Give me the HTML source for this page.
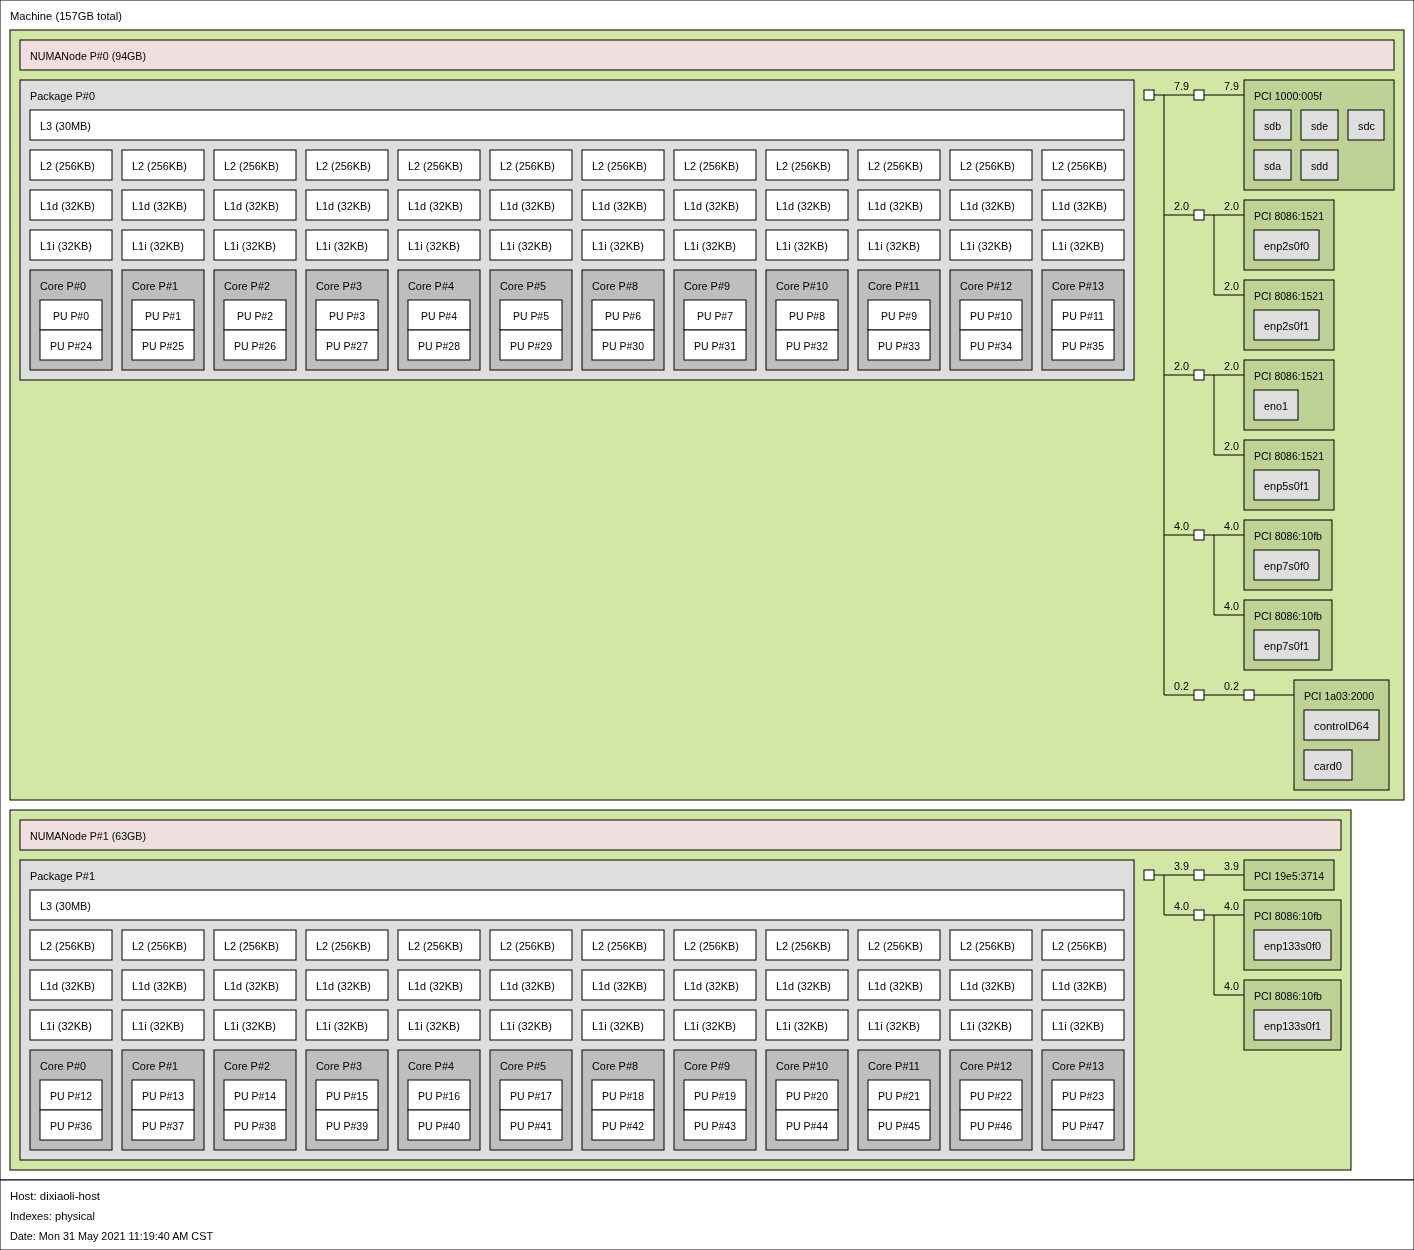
<!DOCTYPE html>
<html lang="en">
<head>
<meta charset="utf-8">
<title>lstopo - dixiaoli-host</title>
<style>
html,body{margin:0;padding:0;background:#fff;}
body{width:1414px;height:1250px;overflow:hidden;}
svg{display:block;will-change:transform;}
rect{stroke:#000;stroke-width:1;}
line{stroke:#000;stroke-width:1;}
text{font-family:"Liberation Sans",sans-serif;font-size:10.75px;fill:#000;}
.mach,.cache,.pu,.br{fill:#fff;}
.grp{fill:#d2e7a4;}
.numa{fill:#efdfde;}
.pkg,.os{fill:#dedede;}
.core{fill:#bebebe;}
.pci{fill:#bed295;}
</style>
</head>
<body>
<svg width="1414" height="1250" viewBox="0 0 1414 1250">
<rect class="mach" x="0" y="0" width="1414" height="1180"/>
<text lengthAdjust="spacingAndGlyphs" x="10" y="20" textLength="112">Machine (157GB total)</text>
<rect class="mach" x="0" y="1180" width="1414" height="70"/>
<text lengthAdjust="spacingAndGlyphs" x="10" y="1200" textLength="90">Host: dixiaoli-host</text>
<text lengthAdjust="spacingAndGlyphs" x="10" y="1220" textLength="85">Indexes: physical</text>
<text lengthAdjust="spacingAndGlyphs" x="10" y="1240" textLength="203">Date: Mon 31 May 2021 11:19:40 AM CST</text>
<rect class="grp" x="10" y="30" width="1394" height="770"/>
<rect class="numa" x="20" y="40" width="1374" height="30"/>
<text lengthAdjust="spacingAndGlyphs" x="30" y="60" textLength="116">NUMANode P#0 (94GB)</text>
<rect class="pkg" x="20" y="80" width="1114" height="300"/>
<text lengthAdjust="spacingAndGlyphs" x="30" y="100" textLength="65">Package P#0</text>
<rect class="cache" x="30" y="110" width="1094" height="30"/>
<text lengthAdjust="spacingAndGlyphs" x="40" y="130" textLength="51">L3 (30MB)</text>
<rect class="cache" x="30" y="150" width="82" height="30"/>
<text lengthAdjust="spacingAndGlyphs" x="40" y="170" textLength="55">L2 (256KB)</text>
<rect class="cache" x="30" y="190" width="82" height="30"/>
<text lengthAdjust="spacingAndGlyphs" x="40" y="210" textLength="55">L1d (32KB)</text>
<rect class="cache" x="30" y="230" width="82" height="30"/>
<text lengthAdjust="spacingAndGlyphs" x="40" y="250" textLength="52">L1i (32KB)</text>
<rect class="core" x="30" y="270" width="82" height="100"/>
<text lengthAdjust="spacingAndGlyphs" x="40" y="290" textLength="46">Core P#0</text>
<rect class="pu" x="40" y="300" width="62" height="30"/>
<text lengthAdjust="spacingAndGlyphs" x="53" y="320" textLength="36">PU P#0</text>
<rect class="pu" x="40" y="330" width="62" height="30"/>
<text lengthAdjust="spacingAndGlyphs" x="50" y="350" textLength="42">PU P#24</text>
<rect class="cache" x="122" y="150" width="82" height="30"/>
<text lengthAdjust="spacingAndGlyphs" x="132" y="170" textLength="55">L2 (256KB)</text>
<rect class="cache" x="122" y="190" width="82" height="30"/>
<text lengthAdjust="spacingAndGlyphs" x="132" y="210" textLength="55">L1d (32KB)</text>
<rect class="cache" x="122" y="230" width="82" height="30"/>
<text lengthAdjust="spacingAndGlyphs" x="132" y="250" textLength="52">L1i (32KB)</text>
<rect class="core" x="122" y="270" width="82" height="100"/>
<text lengthAdjust="spacingAndGlyphs" x="132" y="290" textLength="46">Core P#1</text>
<rect class="pu" x="132" y="300" width="62" height="30"/>
<text lengthAdjust="spacingAndGlyphs" x="145" y="320" textLength="36">PU P#1</text>
<rect class="pu" x="132" y="330" width="62" height="30"/>
<text lengthAdjust="spacingAndGlyphs" x="142" y="350" textLength="42">PU P#25</text>
<rect class="cache" x="214" y="150" width="82" height="30"/>
<text lengthAdjust="spacingAndGlyphs" x="224" y="170" textLength="55">L2 (256KB)</text>
<rect class="cache" x="214" y="190" width="82" height="30"/>
<text lengthAdjust="spacingAndGlyphs" x="224" y="210" textLength="55">L1d (32KB)</text>
<rect class="cache" x="214" y="230" width="82" height="30"/>
<text lengthAdjust="spacingAndGlyphs" x="224" y="250" textLength="52">L1i (32KB)</text>
<rect class="core" x="214" y="270" width="82" height="100"/>
<text lengthAdjust="spacingAndGlyphs" x="224" y="290" textLength="46">Core P#2</text>
<rect class="pu" x="224" y="300" width="62" height="30"/>
<text lengthAdjust="spacingAndGlyphs" x="237" y="320" textLength="36">PU P#2</text>
<rect class="pu" x="224" y="330" width="62" height="30"/>
<text lengthAdjust="spacingAndGlyphs" x="234" y="350" textLength="42">PU P#26</text>
<rect class="cache" x="306" y="150" width="82" height="30"/>
<text lengthAdjust="spacingAndGlyphs" x="316" y="170" textLength="55">L2 (256KB)</text>
<rect class="cache" x="306" y="190" width="82" height="30"/>
<text lengthAdjust="spacingAndGlyphs" x="316" y="210" textLength="55">L1d (32KB)</text>
<rect class="cache" x="306" y="230" width="82" height="30"/>
<text lengthAdjust="spacingAndGlyphs" x="316" y="250" textLength="52">L1i (32KB)</text>
<rect class="core" x="306" y="270" width="82" height="100"/>
<text lengthAdjust="spacingAndGlyphs" x="316" y="290" textLength="46">Core P#3</text>
<rect class="pu" x="316" y="300" width="62" height="30"/>
<text lengthAdjust="spacingAndGlyphs" x="329" y="320" textLength="36">PU P#3</text>
<rect class="pu" x="316" y="330" width="62" height="30"/>
<text lengthAdjust="spacingAndGlyphs" x="326" y="350" textLength="42">PU P#27</text>
<rect class="cache" x="398" y="150" width="82" height="30"/>
<text lengthAdjust="spacingAndGlyphs" x="408" y="170" textLength="55">L2 (256KB)</text>
<rect class="cache" x="398" y="190" width="82" height="30"/>
<text lengthAdjust="spacingAndGlyphs" x="408" y="210" textLength="55">L1d (32KB)</text>
<rect class="cache" x="398" y="230" width="82" height="30"/>
<text lengthAdjust="spacingAndGlyphs" x="408" y="250" textLength="52">L1i (32KB)</text>
<rect class="core" x="398" y="270" width="82" height="100"/>
<text lengthAdjust="spacingAndGlyphs" x="408" y="290" textLength="46">Core P#4</text>
<rect class="pu" x="408" y="300" width="62" height="30"/>
<text lengthAdjust="spacingAndGlyphs" x="421" y="320" textLength="36">PU P#4</text>
<rect class="pu" x="408" y="330" width="62" height="30"/>
<text lengthAdjust="spacingAndGlyphs" x="418" y="350" textLength="42">PU P#28</text>
<rect class="cache" x="490" y="150" width="82" height="30"/>
<text lengthAdjust="spacingAndGlyphs" x="500" y="170" textLength="55">L2 (256KB)</text>
<rect class="cache" x="490" y="190" width="82" height="30"/>
<text lengthAdjust="spacingAndGlyphs" x="500" y="210" textLength="55">L1d (32KB)</text>
<rect class="cache" x="490" y="230" width="82" height="30"/>
<text lengthAdjust="spacingAndGlyphs" x="500" y="250" textLength="52">L1i (32KB)</text>
<rect class="core" x="490" y="270" width="82" height="100"/>
<text lengthAdjust="spacingAndGlyphs" x="500" y="290" textLength="46">Core P#5</text>
<rect class="pu" x="500" y="300" width="62" height="30"/>
<text lengthAdjust="spacingAndGlyphs" x="513" y="320" textLength="36">PU P#5</text>
<rect class="pu" x="500" y="330" width="62" height="30"/>
<text lengthAdjust="spacingAndGlyphs" x="510" y="350" textLength="42">PU P#29</text>
<rect class="cache" x="582" y="150" width="82" height="30"/>
<text lengthAdjust="spacingAndGlyphs" x="592" y="170" textLength="55">L2 (256KB)</text>
<rect class="cache" x="582" y="190" width="82" height="30"/>
<text lengthAdjust="spacingAndGlyphs" x="592" y="210" textLength="55">L1d (32KB)</text>
<rect class="cache" x="582" y="230" width="82" height="30"/>
<text lengthAdjust="spacingAndGlyphs" x="592" y="250" textLength="52">L1i (32KB)</text>
<rect class="core" x="582" y="270" width="82" height="100"/>
<text lengthAdjust="spacingAndGlyphs" x="592" y="290" textLength="46">Core P#8</text>
<rect class="pu" x="592" y="300" width="62" height="30"/>
<text lengthAdjust="spacingAndGlyphs" x="605" y="320" textLength="36">PU P#6</text>
<rect class="pu" x="592" y="330" width="62" height="30"/>
<text lengthAdjust="spacingAndGlyphs" x="602" y="350" textLength="42">PU P#30</text>
<rect class="cache" x="674" y="150" width="82" height="30"/>
<text lengthAdjust="spacingAndGlyphs" x="684" y="170" textLength="55">L2 (256KB)</text>
<rect class="cache" x="674" y="190" width="82" height="30"/>
<text lengthAdjust="spacingAndGlyphs" x="684" y="210" textLength="55">L1d (32KB)</text>
<rect class="cache" x="674" y="230" width="82" height="30"/>
<text lengthAdjust="spacingAndGlyphs" x="684" y="250" textLength="52">L1i (32KB)</text>
<rect class="core" x="674" y="270" width="82" height="100"/>
<text lengthAdjust="spacingAndGlyphs" x="684" y="290" textLength="46">Core P#9</text>
<rect class="pu" x="684" y="300" width="62" height="30"/>
<text lengthAdjust="spacingAndGlyphs" x="697" y="320" textLength="36">PU P#7</text>
<rect class="pu" x="684" y="330" width="62" height="30"/>
<text lengthAdjust="spacingAndGlyphs" x="694" y="350" textLength="42">PU P#31</text>
<rect class="cache" x="766" y="150" width="82" height="30"/>
<text lengthAdjust="spacingAndGlyphs" x="776" y="170" textLength="55">L2 (256KB)</text>
<rect class="cache" x="766" y="190" width="82" height="30"/>
<text lengthAdjust="spacingAndGlyphs" x="776" y="210" textLength="55">L1d (32KB)</text>
<rect class="cache" x="766" y="230" width="82" height="30"/>
<text lengthAdjust="spacingAndGlyphs" x="776" y="250" textLength="52">L1i (32KB)</text>
<rect class="core" x="766" y="270" width="82" height="100"/>
<text lengthAdjust="spacingAndGlyphs" x="776" y="290" textLength="52">Core P#10</text>
<rect class="pu" x="776" y="300" width="62" height="30"/>
<text lengthAdjust="spacingAndGlyphs" x="789" y="320" textLength="36">PU P#8</text>
<rect class="pu" x="776" y="330" width="62" height="30"/>
<text lengthAdjust="spacingAndGlyphs" x="786" y="350" textLength="42">PU P#32</text>
<rect class="cache" x="858" y="150" width="82" height="30"/>
<text lengthAdjust="spacingAndGlyphs" x="868" y="170" textLength="55">L2 (256KB)</text>
<rect class="cache" x="858" y="190" width="82" height="30"/>
<text lengthAdjust="spacingAndGlyphs" x="868" y="210" textLength="55">L1d (32KB)</text>
<rect class="cache" x="858" y="230" width="82" height="30"/>
<text lengthAdjust="spacingAndGlyphs" x="868" y="250" textLength="52">L1i (32KB)</text>
<rect class="core" x="858" y="270" width="82" height="100"/>
<text lengthAdjust="spacingAndGlyphs" x="868" y="290" textLength="52">Core P#11</text>
<rect class="pu" x="868" y="300" width="62" height="30"/>
<text lengthAdjust="spacingAndGlyphs" x="881" y="320" textLength="36">PU P#9</text>
<rect class="pu" x="868" y="330" width="62" height="30"/>
<text lengthAdjust="spacingAndGlyphs" x="878" y="350" textLength="42">PU P#33</text>
<rect class="cache" x="950" y="150" width="82" height="30"/>
<text lengthAdjust="spacingAndGlyphs" x="960" y="170" textLength="55">L2 (256KB)</text>
<rect class="cache" x="950" y="190" width="82" height="30"/>
<text lengthAdjust="spacingAndGlyphs" x="960" y="210" textLength="55">L1d (32KB)</text>
<rect class="cache" x="950" y="230" width="82" height="30"/>
<text lengthAdjust="spacingAndGlyphs" x="960" y="250" textLength="52">L1i (32KB)</text>
<rect class="core" x="950" y="270" width="82" height="100"/>
<text lengthAdjust="spacingAndGlyphs" x="960" y="290" textLength="52">Core P#12</text>
<rect class="pu" x="960" y="300" width="62" height="30"/>
<text lengthAdjust="spacingAndGlyphs" x="970" y="320" textLength="42">PU P#10</text>
<rect class="pu" x="960" y="330" width="62" height="30"/>
<text lengthAdjust="spacingAndGlyphs" x="970" y="350" textLength="42">PU P#34</text>
<rect class="cache" x="1042" y="150" width="82" height="30"/>
<text lengthAdjust="spacingAndGlyphs" x="1052" y="170" textLength="55">L2 (256KB)</text>
<rect class="cache" x="1042" y="190" width="82" height="30"/>
<text lengthAdjust="spacingAndGlyphs" x="1052" y="210" textLength="55">L1d (32KB)</text>
<rect class="cache" x="1042" y="230" width="82" height="30"/>
<text lengthAdjust="spacingAndGlyphs" x="1052" y="250" textLength="52">L1i (32KB)</text>
<rect class="core" x="1042" y="270" width="82" height="100"/>
<text lengthAdjust="spacingAndGlyphs" x="1052" y="290" textLength="52">Core P#13</text>
<rect class="pu" x="1052" y="300" width="62" height="30"/>
<text lengthAdjust="spacingAndGlyphs" x="1062" y="320" textLength="42">PU P#11</text>
<rect class="pu" x="1052" y="330" width="62" height="30"/>
<text lengthAdjust="spacingAndGlyphs" x="1062" y="350" textLength="42">PU P#35</text>
<rect class="grp" x="10" y="810" width="1341" height="360"/>
<rect class="numa" x="20" y="820" width="1321" height="30"/>
<text lengthAdjust="spacingAndGlyphs" x="30" y="840" textLength="116">NUMANode P#1 (63GB)</text>
<rect class="pkg" x="20" y="860" width="1114" height="300"/>
<text lengthAdjust="spacingAndGlyphs" x="30" y="880" textLength="65">Package P#1</text>
<rect class="cache" x="30" y="890" width="1094" height="30"/>
<text lengthAdjust="spacingAndGlyphs" x="40" y="910" textLength="51">L3 (30MB)</text>
<rect class="cache" x="30" y="930" width="82" height="30"/>
<text lengthAdjust="spacingAndGlyphs" x="40" y="950" textLength="55">L2 (256KB)</text>
<rect class="cache" x="30" y="970" width="82" height="30"/>
<text lengthAdjust="spacingAndGlyphs" x="40" y="990" textLength="55">L1d (32KB)</text>
<rect class="cache" x="30" y="1010" width="82" height="30"/>
<text lengthAdjust="spacingAndGlyphs" x="40" y="1030" textLength="52">L1i (32KB)</text>
<rect class="core" x="30" y="1050" width="82" height="100"/>
<text lengthAdjust="spacingAndGlyphs" x="40" y="1070" textLength="46">Core P#0</text>
<rect class="pu" x="40" y="1080" width="62" height="30"/>
<text lengthAdjust="spacingAndGlyphs" x="50" y="1100" textLength="42">PU P#12</text>
<rect class="pu" x="40" y="1110" width="62" height="30"/>
<text lengthAdjust="spacingAndGlyphs" x="50" y="1130" textLength="42">PU P#36</text>
<rect class="cache" x="122" y="930" width="82" height="30"/>
<text lengthAdjust="spacingAndGlyphs" x="132" y="950" textLength="55">L2 (256KB)</text>
<rect class="cache" x="122" y="970" width="82" height="30"/>
<text lengthAdjust="spacingAndGlyphs" x="132" y="990" textLength="55">L1d (32KB)</text>
<rect class="cache" x="122" y="1010" width="82" height="30"/>
<text lengthAdjust="spacingAndGlyphs" x="132" y="1030" textLength="52">L1i (32KB)</text>
<rect class="core" x="122" y="1050" width="82" height="100"/>
<text lengthAdjust="spacingAndGlyphs" x="132" y="1070" textLength="46">Core P#1</text>
<rect class="pu" x="132" y="1080" width="62" height="30"/>
<text lengthAdjust="spacingAndGlyphs" x="142" y="1100" textLength="42">PU P#13</text>
<rect class="pu" x="132" y="1110" width="62" height="30"/>
<text lengthAdjust="spacingAndGlyphs" x="142" y="1130" textLength="42">PU P#37</text>
<rect class="cache" x="214" y="930" width="82" height="30"/>
<text lengthAdjust="spacingAndGlyphs" x="224" y="950" textLength="55">L2 (256KB)</text>
<rect class="cache" x="214" y="970" width="82" height="30"/>
<text lengthAdjust="spacingAndGlyphs" x="224" y="990" textLength="55">L1d (32KB)</text>
<rect class="cache" x="214" y="1010" width="82" height="30"/>
<text lengthAdjust="spacingAndGlyphs" x="224" y="1030" textLength="52">L1i (32KB)</text>
<rect class="core" x="214" y="1050" width="82" height="100"/>
<text lengthAdjust="spacingAndGlyphs" x="224" y="1070" textLength="46">Core P#2</text>
<rect class="pu" x="224" y="1080" width="62" height="30"/>
<text lengthAdjust="spacingAndGlyphs" x="234" y="1100" textLength="42">PU P#14</text>
<rect class="pu" x="224" y="1110" width="62" height="30"/>
<text lengthAdjust="spacingAndGlyphs" x="234" y="1130" textLength="42">PU P#38</text>
<rect class="cache" x="306" y="930" width="82" height="30"/>
<text lengthAdjust="spacingAndGlyphs" x="316" y="950" textLength="55">L2 (256KB)</text>
<rect class="cache" x="306" y="970" width="82" height="30"/>
<text lengthAdjust="spacingAndGlyphs" x="316" y="990" textLength="55">L1d (32KB)</text>
<rect class="cache" x="306" y="1010" width="82" height="30"/>
<text lengthAdjust="spacingAndGlyphs" x="316" y="1030" textLength="52">L1i (32KB)</text>
<rect class="core" x="306" y="1050" width="82" height="100"/>
<text lengthAdjust="spacingAndGlyphs" x="316" y="1070" textLength="46">Core P#3</text>
<rect class="pu" x="316" y="1080" width="62" height="30"/>
<text lengthAdjust="spacingAndGlyphs" x="326" y="1100" textLength="42">PU P#15</text>
<rect class="pu" x="316" y="1110" width="62" height="30"/>
<text lengthAdjust="spacingAndGlyphs" x="326" y="1130" textLength="42">PU P#39</text>
<rect class="cache" x="398" y="930" width="82" height="30"/>
<text lengthAdjust="spacingAndGlyphs" x="408" y="950" textLength="55">L2 (256KB)</text>
<rect class="cache" x="398" y="970" width="82" height="30"/>
<text lengthAdjust="spacingAndGlyphs" x="408" y="990" textLength="55">L1d (32KB)</text>
<rect class="cache" x="398" y="1010" width="82" height="30"/>
<text lengthAdjust="spacingAndGlyphs" x="408" y="1030" textLength="52">L1i (32KB)</text>
<rect class="core" x="398" y="1050" width="82" height="100"/>
<text lengthAdjust="spacingAndGlyphs" x="408" y="1070" textLength="46">Core P#4</text>
<rect class="pu" x="408" y="1080" width="62" height="30"/>
<text lengthAdjust="spacingAndGlyphs" x="418" y="1100" textLength="42">PU P#16</text>
<rect class="pu" x="408" y="1110" width="62" height="30"/>
<text lengthAdjust="spacingAndGlyphs" x="418" y="1130" textLength="42">PU P#40</text>
<rect class="cache" x="490" y="930" width="82" height="30"/>
<text lengthAdjust="spacingAndGlyphs" x="500" y="950" textLength="55">L2 (256KB)</text>
<rect class="cache" x="490" y="970" width="82" height="30"/>
<text lengthAdjust="spacingAndGlyphs" x="500" y="990" textLength="55">L1d (32KB)</text>
<rect class="cache" x="490" y="1010" width="82" height="30"/>
<text lengthAdjust="spacingAndGlyphs" x="500" y="1030" textLength="52">L1i (32KB)</text>
<rect class="core" x="490" y="1050" width="82" height="100"/>
<text lengthAdjust="spacingAndGlyphs" x="500" y="1070" textLength="46">Core P#5</text>
<rect class="pu" x="500" y="1080" width="62" height="30"/>
<text lengthAdjust="spacingAndGlyphs" x="510" y="1100" textLength="42">PU P#17</text>
<rect class="pu" x="500" y="1110" width="62" height="30"/>
<text lengthAdjust="spacingAndGlyphs" x="510" y="1130" textLength="42">PU P#41</text>
<rect class="cache" x="582" y="930" width="82" height="30"/>
<text lengthAdjust="spacingAndGlyphs" x="592" y="950" textLength="55">L2 (256KB)</text>
<rect class="cache" x="582" y="970" width="82" height="30"/>
<text lengthAdjust="spacingAndGlyphs" x="592" y="990" textLength="55">L1d (32KB)</text>
<rect class="cache" x="582" y="1010" width="82" height="30"/>
<text lengthAdjust="spacingAndGlyphs" x="592" y="1030" textLength="52">L1i (32KB)</text>
<rect class="core" x="582" y="1050" width="82" height="100"/>
<text lengthAdjust="spacingAndGlyphs" x="592" y="1070" textLength="46">Core P#8</text>
<rect class="pu" x="592" y="1080" width="62" height="30"/>
<text lengthAdjust="spacingAndGlyphs" x="602" y="1100" textLength="42">PU P#18</text>
<rect class="pu" x="592" y="1110" width="62" height="30"/>
<text lengthAdjust="spacingAndGlyphs" x="602" y="1130" textLength="42">PU P#42</text>
<rect class="cache" x="674" y="930" width="82" height="30"/>
<text lengthAdjust="spacingAndGlyphs" x="684" y="950" textLength="55">L2 (256KB)</text>
<rect class="cache" x="674" y="970" width="82" height="30"/>
<text lengthAdjust="spacingAndGlyphs" x="684" y="990" textLength="55">L1d (32KB)</text>
<rect class="cache" x="674" y="1010" width="82" height="30"/>
<text lengthAdjust="spacingAndGlyphs" x="684" y="1030" textLength="52">L1i (32KB)</text>
<rect class="core" x="674" y="1050" width="82" height="100"/>
<text lengthAdjust="spacingAndGlyphs" x="684" y="1070" textLength="46">Core P#9</text>
<rect class="pu" x="684" y="1080" width="62" height="30"/>
<text lengthAdjust="spacingAndGlyphs" x="694" y="1100" textLength="42">PU P#19</text>
<rect class="pu" x="684" y="1110" width="62" height="30"/>
<text lengthAdjust="spacingAndGlyphs" x="694" y="1130" textLength="42">PU P#43</text>
<rect class="cache" x="766" y="930" width="82" height="30"/>
<text lengthAdjust="spacingAndGlyphs" x="776" y="950" textLength="55">L2 (256KB)</text>
<rect class="cache" x="766" y="970" width="82" height="30"/>
<text lengthAdjust="spacingAndGlyphs" x="776" y="990" textLength="55">L1d (32KB)</text>
<rect class="cache" x="766" y="1010" width="82" height="30"/>
<text lengthAdjust="spacingAndGlyphs" x="776" y="1030" textLength="52">L1i (32KB)</text>
<rect class="core" x="766" y="1050" width="82" height="100"/>
<text lengthAdjust="spacingAndGlyphs" x="776" y="1070" textLength="52">Core P#10</text>
<rect class="pu" x="776" y="1080" width="62" height="30"/>
<text lengthAdjust="spacingAndGlyphs" x="786" y="1100" textLength="42">PU P#20</text>
<rect class="pu" x="776" y="1110" width="62" height="30"/>
<text lengthAdjust="spacingAndGlyphs" x="786" y="1130" textLength="42">PU P#44</text>
<rect class="cache" x="858" y="930" width="82" height="30"/>
<text lengthAdjust="spacingAndGlyphs" x="868" y="950" textLength="55">L2 (256KB)</text>
<rect class="cache" x="858" y="970" width="82" height="30"/>
<text lengthAdjust="spacingAndGlyphs" x="868" y="990" textLength="55">L1d (32KB)</text>
<rect class="cache" x="858" y="1010" width="82" height="30"/>
<text lengthAdjust="spacingAndGlyphs" x="868" y="1030" textLength="52">L1i (32KB)</text>
<rect class="core" x="858" y="1050" width="82" height="100"/>
<text lengthAdjust="spacingAndGlyphs" x="868" y="1070" textLength="52">Core P#11</text>
<rect class="pu" x="868" y="1080" width="62" height="30"/>
<text lengthAdjust="spacingAndGlyphs" x="878" y="1100" textLength="42">PU P#21</text>
<rect class="pu" x="868" y="1110" width="62" height="30"/>
<text lengthAdjust="spacingAndGlyphs" x="878" y="1130" textLength="42">PU P#45</text>
<rect class="cache" x="950" y="930" width="82" height="30"/>
<text lengthAdjust="spacingAndGlyphs" x="960" y="950" textLength="55">L2 (256KB)</text>
<rect class="cache" x="950" y="970" width="82" height="30"/>
<text lengthAdjust="spacingAndGlyphs" x="960" y="990" textLength="55">L1d (32KB)</text>
<rect class="cache" x="950" y="1010" width="82" height="30"/>
<text lengthAdjust="spacingAndGlyphs" x="960" y="1030" textLength="52">L1i (32KB)</text>
<rect class="core" x="950" y="1050" width="82" height="100"/>
<text lengthAdjust="spacingAndGlyphs" x="960" y="1070" textLength="52">Core P#12</text>
<rect class="pu" x="960" y="1080" width="62" height="30"/>
<text lengthAdjust="spacingAndGlyphs" x="970" y="1100" textLength="42">PU P#22</text>
<rect class="pu" x="960" y="1110" width="62" height="30"/>
<text lengthAdjust="spacingAndGlyphs" x="970" y="1130" textLength="42">PU P#46</text>
<rect class="cache" x="1042" y="930" width="82" height="30"/>
<text lengthAdjust="spacingAndGlyphs" x="1052" y="950" textLength="55">L2 (256KB)</text>
<rect class="cache" x="1042" y="970" width="82" height="30"/>
<text lengthAdjust="spacingAndGlyphs" x="1052" y="990" textLength="55">L1d (32KB)</text>
<rect class="cache" x="1042" y="1010" width="82" height="30"/>
<text lengthAdjust="spacingAndGlyphs" x="1052" y="1030" textLength="52">L1i (32KB)</text>
<rect class="core" x="1042" y="1050" width="82" height="100"/>
<text lengthAdjust="spacingAndGlyphs" x="1052" y="1070" textLength="52">Core P#13</text>
<rect class="pu" x="1052" y="1080" width="62" height="30"/>
<text lengthAdjust="spacingAndGlyphs" x="1062" y="1100" textLength="42">PU P#23</text>
<rect class="pu" x="1052" y="1110" width="62" height="30"/>
<text lengthAdjust="spacingAndGlyphs" x="1062" y="1130" textLength="42">PU P#47</text>
<rect class="br" x="1144" y="90" width="10" height="10"/>
<line x1="1154" y1="95" x2="1194" y2="95"/>
<line x1="1164" y1="95" x2="1164" y2="695"/>
<text lengthAdjust="spacingAndGlyphs" x="1174" y="90" textLength="15">7.9</text>
<rect class="br" x="1194" y="90" width="10" height="10"/>
<line x1="1204" y1="95" x2="1244" y2="95"/>
<text lengthAdjust="spacingAndGlyphs" x="1224" y="90" textLength="15">7.9</text>
<rect class="pci" x="1244" y="80" width="150" height="110"/>
<text lengthAdjust="spacingAndGlyphs" x="1254" y="100" textLength="68">PCI 1000:005f</text>
<rect class="os" x="1254" y="110" width="37" height="30"/>
<text lengthAdjust="spacingAndGlyphs" x="1264" y="130" textLength="17">sdb</text>
<rect class="os" x="1301" y="110" width="37" height="30"/>
<text lengthAdjust="spacingAndGlyphs" x="1311" y="130" textLength="17">sde</text>
<rect class="os" x="1348" y="110" width="36" height="30"/>
<text lengthAdjust="spacingAndGlyphs" x="1358" y="130" textLength="17">sdc</text>
<rect class="os" x="1254" y="150" width="37" height="30"/>
<text lengthAdjust="spacingAndGlyphs" x="1264" y="170" textLength="17">sda</text>
<rect class="os" x="1301" y="150" width="37" height="30"/>
<text lengthAdjust="spacingAndGlyphs" x="1311" y="170" textLength="17">sdd</text>
<line x1="1164" y1="215" x2="1194" y2="215"/>
<text lengthAdjust="spacingAndGlyphs" x="1174" y="210" textLength="15">2.0</text>
<rect class="br" x="1194" y="210" width="10" height="10"/>
<line x1="1204" y1="215" x2="1244" y2="215"/>
<text lengthAdjust="spacingAndGlyphs" x="1224" y="210" textLength="15">2.0</text>
<rect class="pci" x="1244" y="200" width="90" height="70"/>
<text lengthAdjust="spacingAndGlyphs" x="1254" y="220" textLength="70">PCI 8086:1521</text>
<rect class="os" x="1254" y="230" width="65" height="30"/>
<text lengthAdjust="spacingAndGlyphs" x="1264" y="250" textLength="45">enp2s0f0</text>
<line x1="1214" y1="215" x2="1214" y2="295"/>
<line x1="1214" y1="295" x2="1244" y2="295"/>
<text lengthAdjust="spacingAndGlyphs" x="1224" y="290" textLength="15">2.0</text>
<rect class="pci" x="1244" y="280" width="90" height="70"/>
<text lengthAdjust="spacingAndGlyphs" x="1254" y="300" textLength="70">PCI 8086:1521</text>
<rect class="os" x="1254" y="310" width="65" height="30"/>
<text lengthAdjust="spacingAndGlyphs" x="1264" y="330" textLength="45">enp2s0f1</text>
<line x1="1164" y1="375" x2="1194" y2="375"/>
<text lengthAdjust="spacingAndGlyphs" x="1174" y="370" textLength="15">2.0</text>
<rect class="br" x="1194" y="370" width="10" height="10"/>
<line x1="1204" y1="375" x2="1244" y2="375"/>
<text lengthAdjust="spacingAndGlyphs" x="1224" y="370" textLength="15">2.0</text>
<rect class="pci" x="1244" y="360" width="90" height="70"/>
<text lengthAdjust="spacingAndGlyphs" x="1254" y="380" textLength="70">PCI 8086:1521</text>
<rect class="os" x="1254" y="390" width="44" height="30"/>
<text lengthAdjust="spacingAndGlyphs" x="1264" y="410" textLength="24">eno1</text>
<line x1="1214" y1="375" x2="1214" y2="455"/>
<line x1="1214" y1="455" x2="1244" y2="455"/>
<text lengthAdjust="spacingAndGlyphs" x="1224" y="450" textLength="15">2.0</text>
<rect class="pci" x="1244" y="440" width="90" height="70"/>
<text lengthAdjust="spacingAndGlyphs" x="1254" y="460" textLength="70">PCI 8086:1521</text>
<rect class="os" x="1254" y="470" width="65" height="30"/>
<text lengthAdjust="spacingAndGlyphs" x="1264" y="490" textLength="45">enp5s0f1</text>
<line x1="1164" y1="535" x2="1194" y2="535"/>
<text lengthAdjust="spacingAndGlyphs" x="1174" y="530" textLength="15">4.0</text>
<rect class="br" x="1194" y="530" width="10" height="10"/>
<line x1="1204" y1="535" x2="1244" y2="535"/>
<text lengthAdjust="spacingAndGlyphs" x="1224" y="530" textLength="15">4.0</text>
<rect class="pci" x="1244" y="520" width="88" height="70"/>
<text lengthAdjust="spacingAndGlyphs" x="1254" y="540" textLength="68">PCI 8086:10fb</text>
<rect class="os" x="1254" y="550" width="65" height="30"/>
<text lengthAdjust="spacingAndGlyphs" x="1264" y="570" textLength="45">enp7s0f0</text>
<line x1="1214" y1="535" x2="1214" y2="615"/>
<line x1="1214" y1="615" x2="1244" y2="615"/>
<text lengthAdjust="spacingAndGlyphs" x="1224" y="610" textLength="15">4.0</text>
<rect class="pci" x="1244" y="600" width="88" height="70"/>
<text lengthAdjust="spacingAndGlyphs" x="1254" y="620" textLength="68">PCI 8086:10fb</text>
<rect class="os" x="1254" y="630" width="65" height="30"/>
<text lengthAdjust="spacingAndGlyphs" x="1264" y="650" textLength="45">enp7s0f1</text>
<line x1="1164" y1="695" x2="1194" y2="695"/>
<text lengthAdjust="spacingAndGlyphs" x="1174" y="690" textLength="15">0.2</text>
<rect class="br" x="1194" y="690" width="10" height="10"/>
<line x1="1204" y1="695" x2="1244" y2="695"/>
<text lengthAdjust="spacingAndGlyphs" x="1224" y="690" textLength="15">0.2</text>
<rect class="br" x="1244" y="690" width="10" height="10"/>
<line x1="1254" y1="695" x2="1294" y2="695"/>
<rect class="pci" x="1294" y="680" width="95" height="110"/>
<text lengthAdjust="spacingAndGlyphs" x="1304" y="700" textLength="70">PCI 1a03:2000</text>
<rect class="os" x="1304" y="710" width="75" height="30"/>
<text lengthAdjust="spacingAndGlyphs" x="1314" y="730" textLength="55">controlD64</text>
<rect class="os" x="1304" y="750" width="48" height="30"/>
<text lengthAdjust="spacingAndGlyphs" x="1314" y="770" textLength="28">card0</text>
<rect class="br" x="1144" y="870" width="10" height="10"/>
<line x1="1154" y1="875" x2="1194" y2="875"/>
<line x1="1164" y1="875" x2="1164" y2="915"/>
<text lengthAdjust="spacingAndGlyphs" x="1174" y="870" textLength="15">3.9</text>
<rect class="br" x="1194" y="870" width="10" height="10"/>
<line x1="1204" y1="875" x2="1244" y2="875"/>
<text lengthAdjust="spacingAndGlyphs" x="1224" y="870" textLength="15">3.9</text>
<rect class="pci" x="1244" y="860" width="90" height="30"/>
<text lengthAdjust="spacingAndGlyphs" x="1254" y="880" textLength="70">PCI 19e5:3714</text>
<line x1="1164" y1="915" x2="1194" y2="915"/>
<text lengthAdjust="spacingAndGlyphs" x="1174" y="910" textLength="15">4.0</text>
<rect class="br" x="1194" y="910" width="10" height="10"/>
<line x1="1204" y1="915" x2="1244" y2="915"/>
<text lengthAdjust="spacingAndGlyphs" x="1224" y="910" textLength="15">4.0</text>
<rect class="pci" x="1244" y="900" width="97" height="70"/>
<text lengthAdjust="spacingAndGlyphs" x="1254" y="920" textLength="68">PCI 8086:10fb</text>
<rect class="os" x="1254" y="930" width="77" height="30"/>
<text lengthAdjust="spacingAndGlyphs" x="1264" y="950" textLength="57">enp133s0f0</text>
<line x1="1214" y1="915" x2="1214" y2="995"/>
<line x1="1214" y1="995" x2="1244" y2="995"/>
<text lengthAdjust="spacingAndGlyphs" x="1224" y="990" textLength="15">4.0</text>
<rect class="pci" x="1244" y="980" width="97" height="70"/>
<text lengthAdjust="spacingAndGlyphs" x="1254" y="1000" textLength="68">PCI 8086:10fb</text>
<rect class="os" x="1254" y="1010" width="77" height="30"/>
<text lengthAdjust="spacingAndGlyphs" x="1264" y="1030" textLength="57">enp133s0f1</text>
</svg>
</body>
</html>
